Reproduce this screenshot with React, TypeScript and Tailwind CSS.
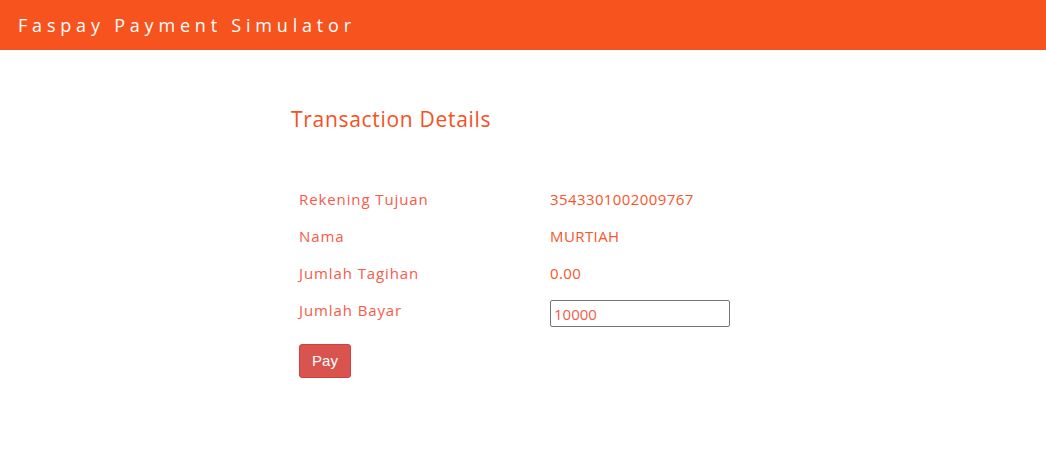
export default function App() {
  const rows = [
    { label: 'Rekening Tujuan', value: '3543301002009767' },
    { label: 'Nama', value: 'MURTIAH' },
    { label: 'Jumlah Tagihan', value: '0.00' },
  ];

  return (
    <div className="min-h-[463px] bg-white font-['Open_Sans',sans-serif]">
      <header className="h-[50px] bg-[#f7531f] flex items-center px-[18px]">
        <span className="text-white text-[18px] tracking-[4.8px]">Faspay Payment Simulator</span>
      </header>
      <main className="mx-auto w-[464px] pt-[54px]">
        <h2 className="text-[#f4511e] text-[21px] leading-[30px] tracking-[0.7px]">Transaction Details</h2>
        <table className="mt-[47px] w-full text-[15px]">
          <tbody>
            {rows.map((r) => (
              <tr key={r.label} className="h-[37px]">
                <td className="px-2 w-[259px] text-[#f45c4a] tracking-[0.9px]">{r.label}</td>
                <td className="px-0 text-[#f7562c] tracking-[0.4px]">{r.value}</td>
              </tr>
            ))}
            <tr className="h-[43px]">
              <td className="px-2 text-[#f45c4a] tracking-[0.9px] align-top pt-[7px]">Jumlah Bayar</td>
              <td>
                <input
                  defaultValue="10000"
                  className="w-[180px] h-[27px] border border-[#767676] rounded-[2px] px-[3px] text-[15px] text-[#f45c4a] outline-none"
                />
              </td>
            </tr>
          </tbody>
        </table>
        <button className="mt-[9px] ml-2 w-[52px] h-[34px] rounded-[3px] bg-[#d9534f] border border-[#d43f3a] text-white text-[15px] font-['Liberation_Sans',sans-serif]">
          Pay
        </button>
      </main>
    </div>
  );
}
